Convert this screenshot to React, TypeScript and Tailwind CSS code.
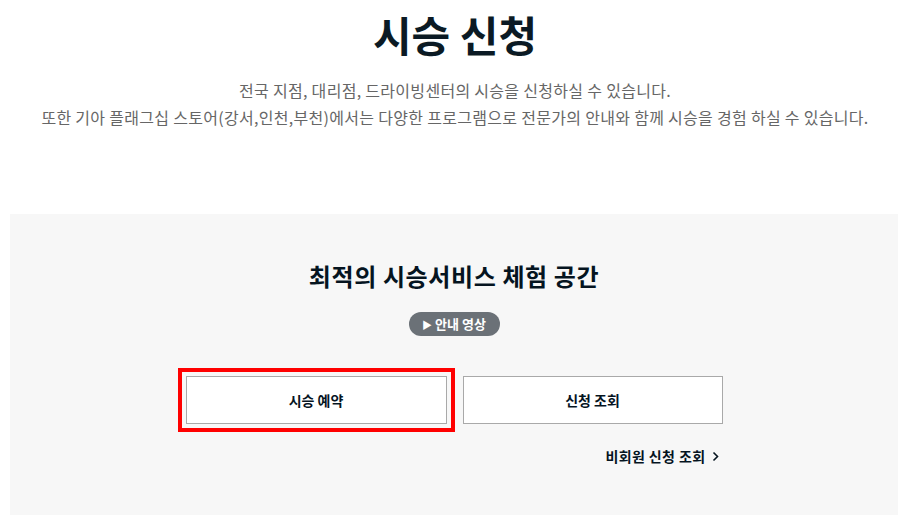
export default function App() {
  const font = { fontFamily: '"Noto Sans CJK KR", "Noto Sans", sans-serif' };
  return (
    <div className="w-[910px] h-[528px] bg-white overflow-hidden" style={font}>
      <div className="flex flex-col items-center">
        <h1 className="mt-[6px] text-[42px] leading-[56px] font-bold text-[#0b1a24]">시승 신청</h1>
        <p className="mt-[15px] text-[16px] leading-[27px] tracking-[0.3px] text-[#666] text-center">
          전국 지점, 대리점, 드라이빙센터의 시승을 신청하실 수 있습니다.
          <br />
          또한 기아 플래그십 스토어(강서,인천,부천)에서는 다양한 프로그램으로 전문가의 안내와 함께 시승을 경험 하실 수 있습니다.
        </p>
      </div>
      <div className="ml-[10px] w-[888px] mt-[83px] h-[301px] bg-[#f7f7f7] flex flex-col items-center">
        <h2 className="mt-[46px] text-[24px] leading-[32px] tracking-[0.6px] font-bold text-[#05141f]">최적의 시승서비스 체험 공간</h2>
        <button className="mt-[20px] h-[24px] w-[91px] rounded-full bg-[#6b7177] text-white text-[13px] font-bold flex items-center justify-center gap-[3px]">
          <span className="text-[10px]">▶</span>
          <span>안내 영상</span>
        </button>
        <div className="mt-[40px] flex gap-[16px]">
          <button className="w-[261px] h-[48px] bg-white border border-[#a9a9a9] text-[14px] font-bold text-[#05141f] outline-4 outline-offset-4 outline-[#ff0000] outline-solid">
            시승 예약
          </button>
          <button className="w-[260px] h-[48px] bg-white border border-[#a9a9a9] text-[14px] font-bold text-[#05141f]">
            신청 조회
          </button>
        </div>
        <div className="w-[537px] flex justify-end mt-[22px] pr-[4px]">
          <a className="text-[14px] tracking-[0.4px] font-bold text-[#05141f] flex items-center gap-[6px]">
            비회원 신청 조회
            <svg width="7" height="11" viewBox="0 0 7 11" fill="none"><path d="M1.5 1.5l4 4-4 4" stroke="#05141f" strokeWidth="1.6" /></svg>
          </a>
        </div>
      </div>
    </div>
  );
}
